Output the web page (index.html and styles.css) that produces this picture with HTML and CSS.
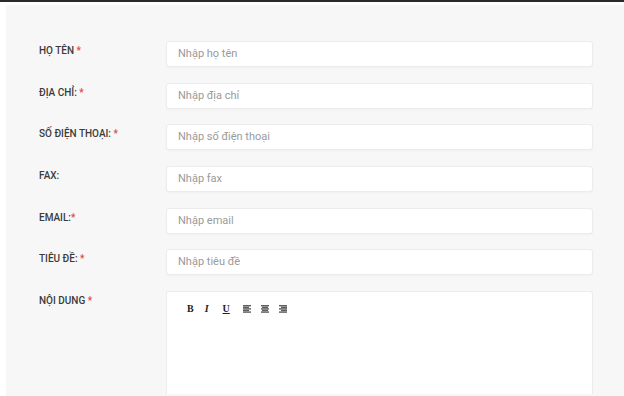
FILE: index.html
```html
<!DOCTYPE html>
<html lang="vi">
<head>
<meta charset="utf-8">
<title>Liên hệ</title>
<link rel="stylesheet" href="styles.css">
</head>
<body>
<div class="panel">
  <form class="form">
    <label class="label">HỌ TÊN <span class="req">*</span></label>
    <div class="field">Nhập họ tên</div>

    <label class="label">ĐỊA CHỈ: <span class="req">*</span></label>
    <div class="field">Nhập địa chỉ</div>

    <label class="label">SỐ ĐIỆN THOẠI: <span class="req">*</span></label>
    <div class="field">Nhập số điện thoại</div>

    <label class="label">FAX:</label>
    <div class="field">Nhập fax</div>

    <label class="label">EMAIL:<span class="req">*</span></label>
    <div class="field">Nhập email</div>

    <label class="label">TIÊU ĐỀ: <span class="req">*</span></label>
    <div class="field">Nhập tiêu đề</div>

    <label class="label">NỘI DUNG <span class="req">*</span></label>
    <div class="editor">
      <div class="toolbar">
        <span class="tb tb-b">B</span>
        <span class="tb tb-i">I</span>
        <span class="tb tb-u">U</span>
        <span class="tb-align">
          <svg width="8" height="8" viewBox="0 0 8 8"><g fill="#5e5e5e"><rect x="0" y="0" width="8" height="1.4"/><rect x="0" y="1.6" width="6" height="1.4"/><rect x="0" y="3.2" width="8" height="1.4"/><rect x="0" y="4.8" width="6" height="1.4"/><rect x="0" y="6.4" width="8" height="1.4"/></g></svg>
          <svg width="8" height="8" viewBox="0 0 8 8"><g fill="#5e5e5e"><rect x="0" y="0" width="8" height="1.4"/><rect x="1" y="1.6" width="6" height="1.4"/><rect x="0" y="3.2" width="8" height="1.4"/><rect x="1" y="4.8" width="6" height="1.4"/><rect x="0" y="6.4" width="8" height="1.4"/></g></svg>
          <svg width="8" height="8" viewBox="0 0 8 8"><g fill="#5e5e5e"><rect x="0" y="0" width="8" height="1.4"/><rect x="2" y="1.6" width="6" height="1.4"/><rect x="0" y="3.2" width="8" height="1.4"/><rect x="2" y="4.8" width="6" height="1.4"/><rect x="0" y="6.4" width="8" height="1.4"/></g></svg>
        </span>
      </div>
    </div>
  </form>
</div>
</body>
</html>
```

FILE: styles.css
```css
html, body {
  margin: 0;
  padding: 0;
  height: 100%;
  overflow: hidden;
}
body {
  background: #ffffff;
  border-top: 2px solid #2a2a2a;
  box-sizing: border-box;
  font-family: Roboto, "Noto Sans", sans-serif;
}
.panel {
  margin: 3px 0 0 6px;
  background: #f7f7f7;
  padding: 36px 0 0 33px;
  height: 391px;
  box-sizing: border-box;
  overflow: hidden;
}
.form {
  display: grid;
  grid-template-columns: 127px 427px;
  row-gap: 15.67px;
}
.label {
  font-size: 10px;
  font-weight: 500;
  color: #3b3b3b;
  padding-top: 4px;
  line-height: 12px;
}
.req {
  color: #e0474c;
}
.field {
  height: 26px;
  box-sizing: border-box;
  background: #fff;
  border: 1px solid #ececec;
  border-radius: 3px;
  box-shadow: 0 1px 2px rgba(0,0,0,0.03);
  padding-left: 11px;
  font-size: 11px;
  line-height: 24px;
  color: #9a9a9a;
}
.editor {
  height: 103px;
  background: #fff;
  border: 1px solid #ececec;
  border-bottom: 0;
  border-radius: 3px 3px 0 0;
  box-sizing: border-box;
}
.toolbar {
  display: flex;
  align-items: center;
  padding: 10px 0 0 20px;
  height: 14px;
}
.tb {
  font-family: "Liberation Serif", "DejaVu Serif", serif;
  font-weight: bold;
  font-size: 10px;
  color: #222;
  line-height: 10px;
}
.tb-b { margin-right: 11px; }
.tb-i { font-style: italic; margin-right: 14px; }
.tb-u { text-decoration: underline; margin-right: 13px; }
.tb-align {
  display: flex;
  gap: 10px;
}
.tb-align svg { display: block; }
```
